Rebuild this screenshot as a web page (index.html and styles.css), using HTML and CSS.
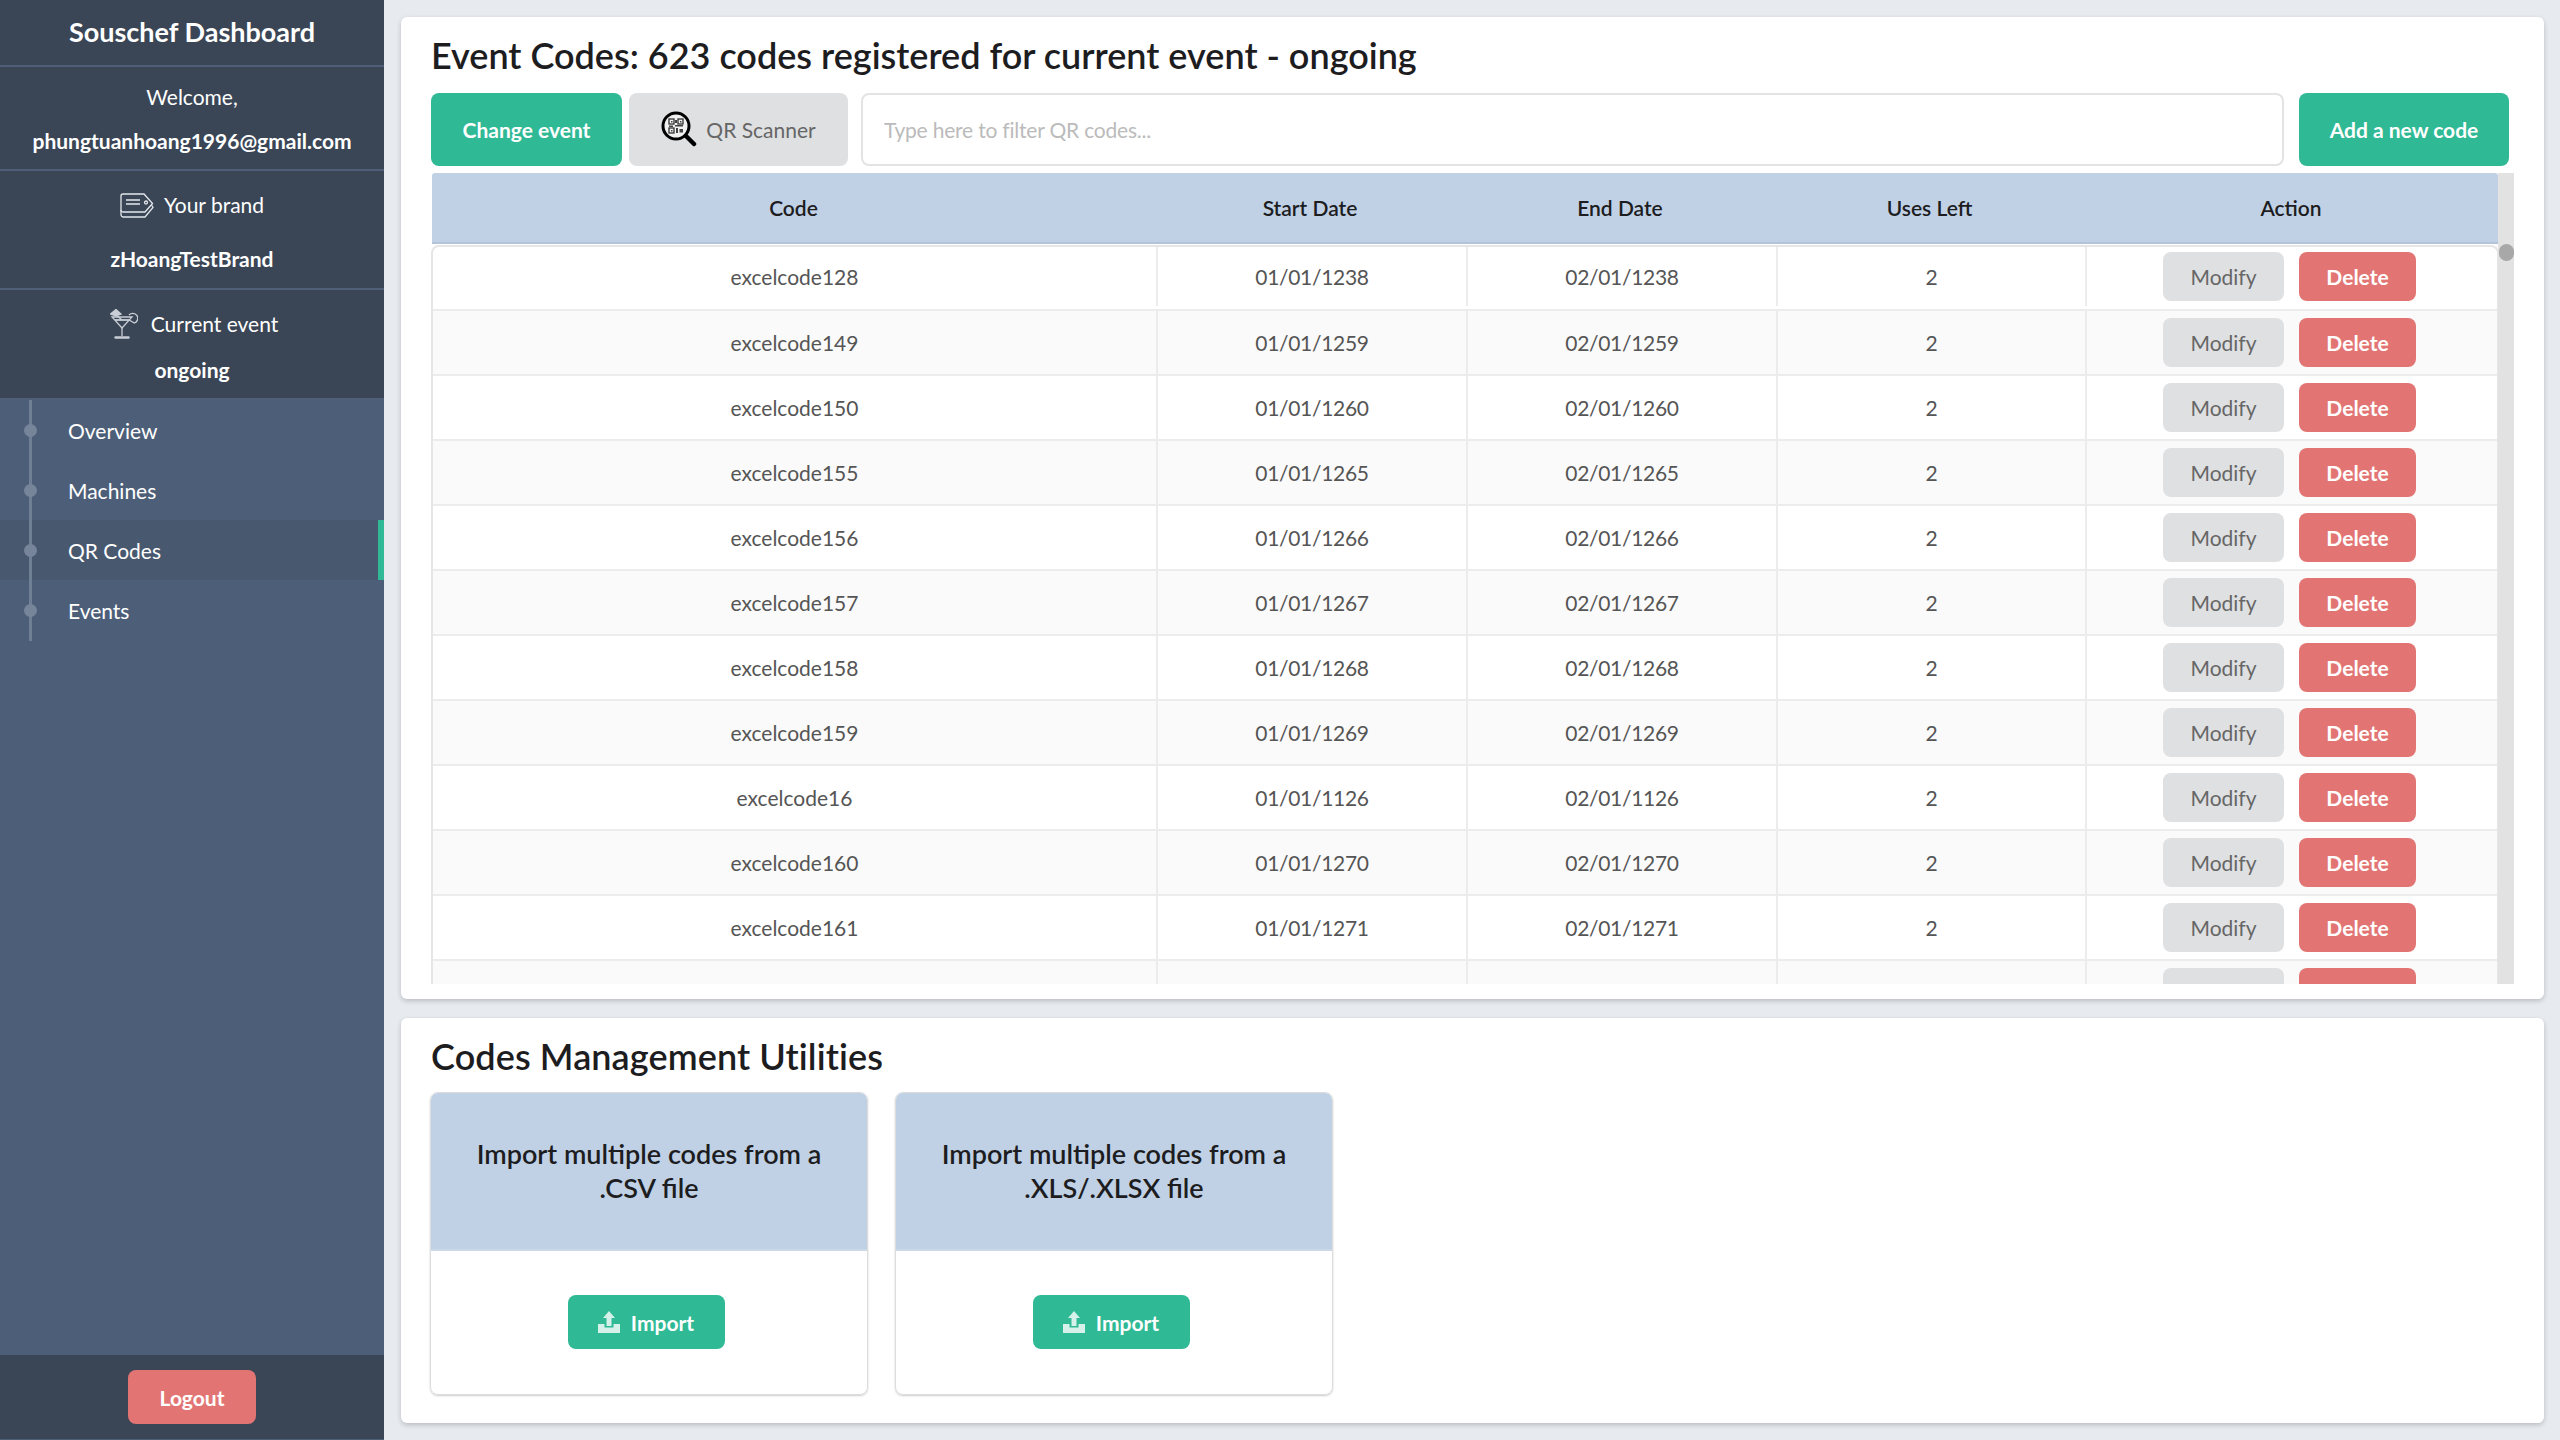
FILE: index.html
```html
<!DOCTYPE html>
<html lang="en">
<head>
    <meta charset="UTF-8">
    <meta name="viewport" content="width=device-width, initial-scale=1.0">
    <title>Souschef Dashboard</title>
    <link rel="stylesheet" href="styles.css">
</head>
<body>

    <aside class="sidebar">
        <div class="side-title">Souschef Dashboard</div>
        <div class="side-block welcome">
            <div class="side-line">Welcome,</div>
            <div class="side-line strong">phungtuanhoang1996@gmail.com</div>
        </div>
        <div class="side-block brand">
            <div class="side-line">
                <svg class="tag-icon" viewBox="0 0 34 25" fill="none" stroke="#e4e7ec" stroke-width="1.3">
                    <path d="M3 1h21l8.500 9.500L25 19H3a2 2 0 0 1-2-2V3a2 2 0 0 1 2-2z"/>
                    <path d="M1 17v4.500a2.500 2.500 0 0 0 2.500 2.500H25l8-9.500-1.500-2.500"/>
                    <path d="M6 7h14M6 11h14" stroke-width="1.600"/>
                    <circle cx="26" cy="9.500" r="1.500"/>
                </svg>
                Your brand
            </div>
            <div class="side-line strong brand-name">zHoangTestBrand</div>
        </div>
        <div class="side-block event">
            <div class="side-line event-line">
                <svg class="glass-icon" viewBox="0 0 28 30" fill="none" stroke="#c9ced6" stroke-width="1.300">
                    <path d="M2 8h20L12 19z"/>
                    <path d="M5 11h14" stroke-width="1.800"/>
                    <path d="M12 19v8"/>
                    <path d="M5.500 28.500h13" stroke-width="2.400" stroke-linecap="round"/>
                    <path d="M0.500 5L6 0.500 11 5 6 7z" fill="#c9ced6"/>
                    <path d="M6 6l6 5"/>
                    <path d="M19 6a5 5 0 1 1 5.500 8L19 11"/>
                </svg>
                Current event
            </div>
            <div class="side-line strong">ongoing</div>
        </div>

        <nav class="side-nav">
            <div class="nav-rail"></div>
            <a class="nav-item"><span class="nav-dot"></span>Overview</a>
            <a class="nav-item"><span class="nav-dot"></span>Machines</a>
            <a class="nav-item active"><span class="nav-dot"></span>QR Codes</a>
            <a class="nav-item"><span class="nav-dot"></span>Events</a>
        </nav>

        <div class="side-footer">
            <button class="btn btn-red logout">Logout</button>
        </div>
    </aside>

    <main class="content">
        <section class="card codes-card">
            <h2 class="card-title">Event Codes: 623 codes registered for current event - ongoing</h2>

            <div class="toolbar">
                <button class="btn btn-teal change-btn">Change event</button>
                <button class="btn btn-grey scanner-btn">
                    <svg class="scan-icon" viewBox="0 0 36 37">
                        <circle cx="15" cy="15" r="13" fill="#f1f1f1" stroke="#000" stroke-width="3"/>
                        <path d="M25 25l8 8" stroke="#000" stroke-width="4.500" stroke-linecap="round"/>
                        <g fill="none" stroke="#333" stroke-width="1.300">
                            <rect x="8" y="8" width="5" height="5"/>
                            <rect x="17" y="8" width="5" height="5"/>
                            <rect x="8" y="17" width="5" height="5"/>
                        </g>
                        <g fill="#444">
                            <rect x="10" y="10" width="1.500" height="1.500"/>
                            <rect x="19" y="10" width="1.500" height="1.500"/>
                            <rect x="10" y="19" width="1.500" height="1.500"/>
                            <rect x="14" y="9" width="2" height="3"/>
                            <rect x="14" y="14" width="8" height="1.500"/>
                            <rect x="8" y="14.500" width="4" height="1.500"/>
                            <rect x="15" y="17" width="2" height="5"/>
                            <rect x="18.500" y="18" width="3.500" height="3.500"/>
                        </g>
                    </svg>
                    QR Scanner
                </button>
                <input class="filter-input" type="text" placeholder="Type here to filter QR codes...">
                <button class="btn btn-teal add-btn">Add a new code</button>
            </div>

            <div class="table-area">
                <div class="table-main">
                    <div class="codes-row codes-head">
                        <div>Code</div>
                        <div>Start Date</div>
                        <div>End Date</div>
                        <div>Uses Left</div>
                        <div>Action</div>
                    </div>
                    <div class="codes-body">
                        <div class="codes-row">
                            <div>excelcode128</div><div class="num">01/01/1238</div><div class="num">02/01/1238</div><div>2</div>
                            <div class="actions"><button class="btn btn-grey mod-btn">Modify</button><button class="btn btn-red del-btn">Delete</button></div>
                        </div>
                        <div class="codes-row">
                            <div>excelcode149</div><div class="num">01/01/1259</div><div class="num">02/01/1259</div><div>2</div>
                            <div class="actions"><button class="btn btn-grey mod-btn">Modify</button><button class="btn btn-red del-btn">Delete</button></div>
                        </div>
                        <div class="codes-row">
                            <div>excelcode150</div><div class="num">01/01/1260</div><div class="num">02/01/1260</div><div>2</div>
                            <div class="actions"><button class="btn btn-grey mod-btn">Modify</button><button class="btn btn-red del-btn">Delete</button></div>
                        </div>
                        <div class="codes-row">
                            <div>excelcode155</div><div class="num">01/01/1265</div><div class="num">02/01/1265</div><div>2</div>
                            <div class="actions"><button class="btn btn-grey mod-btn">Modify</button><button class="btn btn-red del-btn">Delete</button></div>
                        </div>
                        <div class="codes-row">
                            <div>excelcode156</div><div class="num">01/01/1266</div><div class="num">02/01/1266</div><div>2</div>
                            <div class="actions"><button class="btn btn-grey mod-btn">Modify</button><button class="btn btn-red del-btn">Delete</button></div>
                        </div>
                        <div class="codes-row">
                            <div>excelcode157</div><div class="num">01/01/1267</div><div class="num">02/01/1267</div><div>2</div>
                            <div class="actions"><button class="btn btn-grey mod-btn">Modify</button><button class="btn btn-red del-btn">Delete</button></div>
                        </div>
                        <div class="codes-row">
                            <div>excelcode158</div><div class="num">01/01/1268</div><div class="num">02/01/1268</div><div>2</div>
                            <div class="actions"><button class="btn btn-grey mod-btn">Modify</button><button class="btn btn-red del-btn">Delete</button></div>
                        </div>
                        <div class="codes-row">
                            <div>excelcode159</div><div class="num">01/01/1269</div><div class="num">02/01/1269</div><div>2</div>
                            <div class="actions"><button class="btn btn-grey mod-btn">Modify</button><button class="btn btn-red del-btn">Delete</button></div>
                        </div>
                        <div class="codes-row">
                            <div>excelcode16</div><div class="num">01/01/1126</div><div class="num">02/01/1126</div><div>2</div>
                            <div class="actions"><button class="btn btn-grey mod-btn">Modify</button><button class="btn btn-red del-btn">Delete</button></div>
                        </div>
                        <div class="codes-row">
                            <div>excelcode160</div><div class="num">01/01/1270</div><div class="num">02/01/1270</div><div>2</div>
                            <div class="actions"><button class="btn btn-grey mod-btn">Modify</button><button class="btn btn-red del-btn">Delete</button></div>
                        </div>
                        <div class="codes-row">
                            <div>excelcode161</div><div class="num">01/01/1271</div><div class="num">02/01/1271</div><div>2</div>
                            <div class="actions"><button class="btn btn-grey mod-btn">Modify</button><button class="btn btn-red del-btn">Delete</button></div>
                        </div>
                        <!-- row cut by the scroll box, only the tops of the buttons show -->
                        <div class="codes-row">
                            <div></div><div></div><div></div><div></div>
                            <div class="actions"><button class="btn btn-grey mod-btn"></button><button class="btn btn-red del-btn"></button></div>
                        </div>
                    </div>
                </div>
                <div class="scroll-track"><div class="scroll-thumb"></div></div>
            </div>
        </section>

        <section class="card utils-card">
            <h2 class="card-title">Codes Management Utilities</h2>
            <div class="import-list">
                <div class="import-box">
                    <div class="import-head">Import multiple codes from a .CSV file</div>
                    <div class="import-foot">
                        <button class="btn btn-teal import-btn">
                            <svg class="upload-icon" viewBox="0 0 22 22">
                                <path d="M11 0l6 7h-3.500v8h-5V7H5z" fill="#d5f1e9"/>
                                <path d="M0 13h6.500v3.500h9V13H22v9H0z" fill="#d5f1e9"/>
                            </svg>
                            Import
                        </button>
                    </div>
                </div>
                <div class="import-box">
                    <div class="import-head">Import multiple codes from a .XLS/.XLSX file</div>
                    <div class="import-foot">
                        <button class="btn btn-teal import-btn">
                            <svg class="upload-icon" viewBox="0 0 22 22">
                                <path d="M11 0l6 7h-3.500v8h-5V7H5z" fill="#d5f1e9"/>
                                <path d="M0 13h6.500v3.500h9V13H22v9H0z" fill="#d5f1e9"/>
                            </svg>
                            Import
                        </button>
                    </div>
                </div>
            </div>
        </section>
    </main>

</body>
</html>
```

FILE: styles.css
```css
* {
    margin: 0;
    padding: 0;
    box-sizing: border-box;
}
body {
    font-family: 'Lato', 'Liberation Sans', sans-serif;
    font-size: 21px;
    background-color: #e7eaef;
    color: #555;
    display: flex;
    height: 1440px;
    overflow: hidden;
}

/* sidebar */
.sidebar {
    width: 384px;
    flex-shrink: 0;
    height: 100%;
    display: flex;
    flex-direction: column;
    background-color: #3a4656;
    color: #fff;
    text-align: center;
}
.side-title {
    height: 67px;
    line-height: 64px;
    font-size: 27px;
    font-weight: 700;
    border-bottom: 2px solid #4f5f78;
}
.side-block {
    border-bottom: 2px solid #4f5f78;
}
.welcome {
    height: 104px;
    padding-top: 8px;
}
.brand {
    height: 119px;
    padding-top: 12px;
}
.event {
    height: 110px;
    padding-top: 12px;
}
.event .strong {
    margin-top: 2px;
}
.event-line {
    padding-left: 4px;
}
.side-line {
    height: 44px;
    line-height: 44px;
    display: flex;
    justify-content: center;
    align-items: center;
}
.strong {
    font-weight: 700;
}
.brand-name {
    margin-top: 10px;
}
.tag-icon {
    width: 34px;
    height: 25px;
    margin-right: 10px;
}
.glass-icon {
    width: 28px;
    height: 30px;
    margin-right: 13px;
}
.side-nav {
    flex: 1;
    position: relative;
    background-color: #4d5f78;
}
.nav-rail {
    position: absolute;
    z-index: 1;
    left: 29px;
    top: 0;
    width: 3px;
    height: 241px;
    background-color: #6f7f94;
}
.nav-item {
    position: relative;
    display: flex;
    align-items: center;
    height: 60px;
    padding-left: 68px;
}
.nav-item.active {
    background-color: #48586f;
    border-right: 6px solid #2fb995;
}
.nav-dot {
    position: absolute;
    z-index: 2;
    left: 24px;
    top: 24px;
    width: 13px;
    height: 13px;
    border-radius: 50%;
    background-color: #76859a;
}
.side-footer {
    height: 85px;
    padding-top: 15px;
    border-bottom: 1px solid #4d5f78;
}

/* buttons */
.btn {
    font-family: inherit;
    font-size: 21px;
    border: none;
    border-radius: 8px;
    display: inline-flex;
    justify-content: center;
    align-items: center;
}
.btn-teal {
    background-color: #2fb995;
    color: #fff;
    font-weight: 700;
}
.btn-red {
    background-color: #e27573;
    color: #fff;
    font-weight: 700;
}
.btn-grey {
    background-color: #dfe0e2;
    color: #666;
}
.logout {
    width: 128px;
    height: 54px;
}

/* cards */
.content {
    flex: 1;
    display: flex;
    flex-direction: column;
    gap: 19px;
    padding: 17px 16px 0 17px;
}
.card {
    background-color: #fff;
    border-radius: 6px;
    box-shadow: 0 2px 5px rgba(0, 0, 0, 0.2);
    padding-left: 30px;
}
.codes-card {
    height: 982px;
}
.utils-card {
    height: 405px;
}
.card-title {
    height: 76px;
    line-height: 76px;
    font-size: 36px;
    font-weight: 600;
    color: #1d1d1f;
}
.utils-card .card-title {
    height: 74px;
    line-height: 76px;
    letter-spacing: 0.1px;
}

/* toolbar */
.toolbar {
    display: flex;
    height: 73px;
    margin-bottom: 7px;
}
.change-btn {
    width: 191px;
    margin-right: 7px;
}
.scanner-btn {
    width: 219px;
    margin-right: 13px;
}
.scan-icon {
    width: 36px;
    height: 37px;
    margin-right: 9px;
}
.filter-input {
    width: 1423px;
    margin-right: 15px;
    padding-left: 21px;
    font-family: inherit;
    font-size: 21px;
    letter-spacing: -0.2px;
    border: 2px solid #e3e3e3;
    border-radius: 8px;
}
.filter-input::placeholder {
    color: #bbb;
}
.add-btn {
    width: 210px;
}

/* codes table */
.table-area {
    display: flex;
    width: 2083px;
    height: 811px;
    overflow: hidden;
}
.table-main {
    width: 2067px;
    padding-left: 1px;
}
.codes-row {
    display: grid;
    grid-template-columns: 725px 310px 310px 309px 1fr;
    height: 65px;
    border-bottom: 2px solid #ececec;
}
.codes-row > div {
    display: flex;
    justify-content: center;
    align-items: center;
    border-right: 2px solid #ececec;
}
.codes-row > div:last-child {
    border-right: none;
}
.codes-row:nth-child(even) {
    background-color: #fafafa;
}
.codes-row > .num {
    letter-spacing: -0.3px;
}
.codes-head {
    grid-template-columns: 723px 310px 310px 309px 1fr;
    height: 71px;
    margin-bottom: 1px;
    background-color: #c0d1e6;
    color: #1d1d1f;
    font-weight: 600;
    border-bottom: 2px solid #b3c4da;
    border-radius: 3px 3px 0 0;
}
.codes-head > div {
    border-right: none;
}
.codes-body {
    border: 2px solid #e6e6e6;
    border-bottom: none;
    border-radius: 8px 8px 0 0;
    margin-left: -1px;
    margin-right: -1px;
}
.codes-body .codes-row:first-child {
    height: 64px;
    padding-bottom: 3px;
}
.actions {
    gap: 15px;
    padding-right: 5px;
}
.mod-btn {
    width: 121px;
    height: 49px;
}
.del-btn {
    width: 117px;
    height: 49px;
}
.scroll-track {
    width: 16px;
    height: 100%;
    background-color: #e2e2e2;
    padding-top: 71px;
}
.scroll-thumb {
    width: 15px;
    height: 17px;
    margin-left: 1px;
    border-radius: 8px;
    background-color: #a8a8a8;
}

/* import boxes */
.import-list {
    display: flex;
    gap: 27px;
    margin-left: -1px;
}
.import-box {
    width: 438px;
    height: 303px;
    border: 1px solid #ddd;
    border-radius: 8px;
    box-shadow: 0 1px 2px rgba(0, 0, 0, 0.2);
    overflow: hidden;
}
.import-head {
    height: 158px;
    padding: 0 30px;
    background-color: #c0d1e6;
    border-bottom: 2px solid #ccd8e8;
    display: flex;
    align-items: center;
    justify-content: center;
    text-align: center;
    font-size: 27px;
    line-height: 34px;
    font-weight: 600;
    color: #1d1d1f;
}
.import-foot {
    display: flex;
    justify-content: center;
    padding-top: 44px;
    padding-right: 6px;
}
.import-btn {
    width: 157px;
    height: 54px;
}
.upload-icon {
    width: 22px;
    height: 22px;
    margin-right: 11px;
}
```
